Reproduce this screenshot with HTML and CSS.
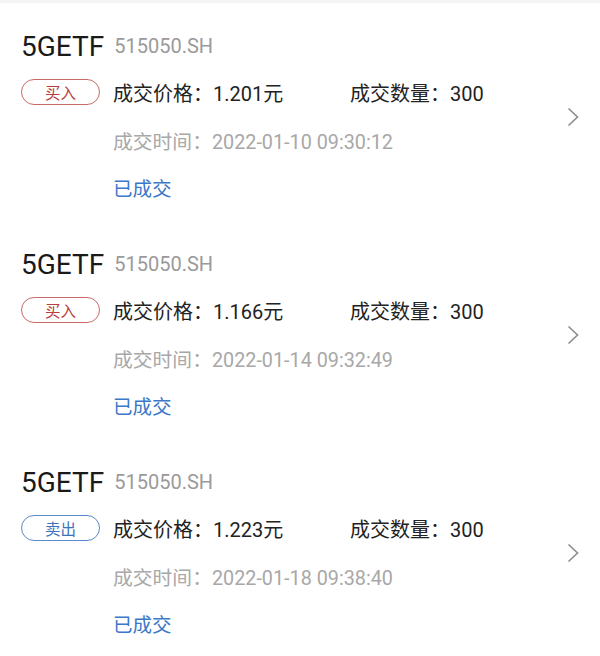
FILE: index.html
```html
<!DOCTYPE html>
<html lang="zh-CN">
  <head>
    <meta charset="UTF-8" />
    <meta name="viewport" content="width=device-width, initial-scale=1.0" />
    <title>成交记录</title>
    <link rel="stylesheet" href="styles.css">
  </head>
  <body>
    <div class="top-bar"></div>
    <div class="trade-list">
      <div class="trade">
        <div class="trade-main">
          <div class="trade-head">
            <span class="trade-name">5GETF</span>
            <span class="trade-code">515050.SH</span>
          </div>
          <div class="trade-row">
            <span class="badge badge-buy">买入</span>
            <span class="trade-price">成交价格：1.201元</span>
            <span class="trade-qty">成交数量：300</span>
          </div>
          <div class="trade-time">成交时间：2022-01-10 09:30:12</div>
          <div class="trade-status">已成交</div>
        </div>
        <svg class="chevron" width="12" height="20" viewBox="0 0 12 20">
          <polyline points="1.5,1.5 10.5,10 1.5,18.5" />
        </svg>
      </div>

      <div class="trade">
        <div class="trade-main">
          <div class="trade-head">
            <span class="trade-name">5GETF</span>
            <span class="trade-code">515050.SH</span>
          </div>
          <div class="trade-row">
            <span class="badge badge-buy">买入</span>
            <span class="trade-price">成交价格：1.166元</span>
            <span class="trade-qty">成交数量：300</span>
          </div>
          <div class="trade-time">成交时间：2022-01-14 09:32:49</div>
          <div class="trade-status">已成交</div>
        </div>
        <svg class="chevron" width="12" height="20" viewBox="0 0 12 20">
          <polyline points="1.5,1.5 10.5,10 1.5,18.5" />
        </svg>
      </div>

      <div class="trade">
        <div class="trade-main">
          <div class="trade-head">
            <span class="trade-name">5GETF</span>
            <span class="trade-code">515050.SH</span>
          </div>
          <div class="trade-row">
            <span class="badge badge-sell">卖出</span>
            <span class="trade-price">成交价格：1.223元</span>
            <span class="trade-qty">成交数量：300</span>
          </div>
          <div class="trade-time">成交时间：2022-01-18 09:38:40</div>
          <div class="trade-status">已成交</div>
        </div>
        <svg class="chevron" width="12" height="20" viewBox="0 0 12 20">
          <polyline points="1.5,1.5 10.5,10 1.5,18.5" />
        </svg>
      </div>
    </div>
  </body>
</html>
```

FILE: styles.css
```css
body {
  margin: 0;
  background-color: #ffffff;
  font-family: Roboto, 'Noto Sans CJK SC', sans-serif;
  color: #222;
}

.top-bar {
  height: 3px;
  background-color: #f4f4f4;
}

.trade {
  display: flex;
  align-items: center;
  justify-content: space-between;
  padding: 19px 21px 10px 21px;
}

.trade-main {
  display: flex;
  flex-direction: column;
}

.trade-head,
.trade-row,
.trade-time,
.trade-status {
  height: 48px;
  display: flex;
  align-items: center;
}

.trade-head {
  gap: 10px;
}

.trade-name {
  font-size: 28px;
  color: #1a1a1a;
}

.trade-code {
  font-size: 20px;
  color: #9a9a9a;
}

.trade-row {
  display: grid;
  grid-template-columns: 79px 224px auto;
  column-gap: 13px;
  align-items: center;
  font-size: 20px;
  margin-top: -2px;
}

.badge {
  height: 26px;
  box-sizing: border-box;
  border-radius: 13px;
  border: 1.4px solid;
  display: flex;
  align-items: center;
  justify-content: center;
  font-size: 15.5px;
}

.badge-buy {
  border-color: #c96a66;
  color: #b8403c;
}

.badge-sell {
  border-color: #5a8acb;
  color: #3e72ba;
}

.trade-time {
  margin-left: 92px;
  font-size: 19.8px;
  color: #a8a8a8;
}

.trade-status {
  margin-left: 92px;
  margin-top: -1px;
  font-size: 19.5px;
  color: #3b78c9;
}

.chevron {
  flex-shrink: 0;
}

.chevron polyline {
  fill: none;
  stroke: #8c8c8c;
  stroke-width: 1.6;
}
```
